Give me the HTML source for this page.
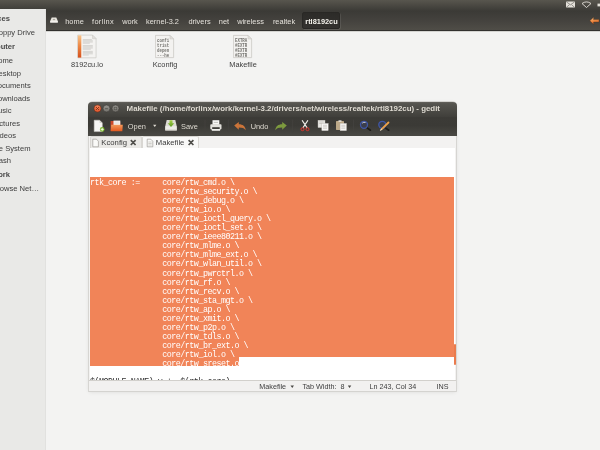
<!DOCTYPE html>
<html>
<head>
<meta charset="utf-8">
<title>Makefile - gedit</title>
<style>
html,body{margin:0;padding:0;}
body{width:600px;height:450px;overflow:hidden;position:relative;background:#f3f3f2;font-family:"Liberation Sans",sans-serif;color:#3c3c3c;}
.abs{position:absolute;}
#wrap{position:absolute;left:0;top:0;width:600px;height:450px;will-change:transform;}
#panel{left:0;top:0;width:600px;height:11px;background:linear-gradient(#58564e,#4b4943 45%,#3b3a36);}
#pathbar{left:46px;top:11px;width:554px;height:20px;background:linear-gradient(#3b3a36,#43413d 45%,#4f4d47);border-bottom:1px solid #32312e;box-shadow:0 1px 0 rgba(120,118,112,0.25);box-sizing:border-box;}
#sidebar{left:0;top:9.4px;width:46.3px;height:441px;background:#e9e9e7;border-right:0.6px solid #e1e1df;box-sizing:border-box;}
.sb{position:absolute;white-space:nowrap;font-size:7.6px;line-height:10px;height:10px;text-align:right;left:-60px;color:#3c3c3c;}
.sb.h{font-weight:bold;color:#4a4a4a;}
.pb{position:absolute;top:16.5px;font-size:7.4px;line-height:10px;height:10px;color:#e6e3dc;white-space:nowrap;text-align:center;}
.lbl{position:absolute;font-size:7.4px;line-height:10px;width:60px;text-align:center;color:#3c3c3c;white-space:nowrap;}
#sel{left:302px;top:12.3px;width:38.3px;height:17px;border-radius:2px;background:linear-gradient(#2c2b28,#34322f);border:1px solid #292825;box-sizing:border-box;box-shadow:0.7px 0.7px 0 rgba(255,255,255,0.13);}
#win{left:89.1px;top:102px;width:366.9px;height:289px;background:#f3f2f1;border-radius:4px 4px 0 0;box-shadow:0 0 0 0.9px #d4d3d0,0 1px 4px rgba(0,0,0,0.10);}
#title{left:-0.9px;top:-0.3px;width:368.7px;height:15.3px;border-radius:4px 4px 0 0;background:linear-gradient(#63615c,#55544f 12%,#403f3b);}
#ttext{left:27.2px;top:1.1px;width:334px;height:11px;line-height:11px;font-size:7.89px;font-weight:bold;color:#dfdbd2;white-space:nowrap;text-align:center;}
#tool{left:-0.9px;top:15px;width:368.7px;height:18.7px;background:linear-gradient(#3c3b37,#3b3a36 45%,#4a4944);}
.tt{position:absolute;top:19.6px;font-size:7.4px;line-height:10px;height:10px;color:#dfdbd2;white-space:nowrap;text-align:center;}
#tabs{left:-0.1px;top:33.7px;width:367px;height:12.7px;background:#f3f2f1;}
.tab{position:absolute;top:0;height:12.7px;box-sizing:border-box;border:1px solid #d9d7d3;border-bottom:none;border-radius:2px 2px 0 0;}
.tabt{position:absolute;top:2.3px;font-size:7.7px;line-height:10px;height:10px;color:#3c3c3c;white-space:nowrap;text-align:center;}
#view{left:0.9px;top:46.4px;width:365px;height:231.4px;background:#fff;overflow:hidden;}
#code{position:absolute;left:0;top:-7.3px;margin:0;font-family:"Liberation Mono",monospace;font-size:8.4px;letter-spacing:-0.51px;line-height:9.02px;color:#333;white-space:pre;tab-size:8;-moz-tab-size:8;}
.ln{display:block;height:9.02px;}
.t{position:relative;top:2.2px;}
.s{background:#f18458;color:#fff;}
.ln.s{width:364px;}
#status{left:0;top:277.6px;width:366.9px;height:11.4px;background:#f2f1f0;border-top:1px solid #d2d0cc;box-sizing:border-box;}
.st{position:absolute;top:1.3px;font-size:7.2px;line-height:10px;height:10px;color:#3c3c3c;white-space:nowrap;text-align:center;}
#thumb{left:365.1px;top:241.8px;width:2.2px;height:21.7px;background:#ea7b4d;border-radius:1px;}
</style>
</head>
<body>
<div id="wrap">
<div id="panel" class="abs"></div>
<div id="sidebar" class="abs">
<div class="sb h" style="width:70.0px;top:4.5px">Devices</div>
<div class="sb" style="width:95.0px;top:18.5px">Floppy Drive</div>
<div class="sb h" style="width:75.0px;top:32.5px">Computer</div>
<div class="sb" style="width:73.0px;top:47.0px">Home</div>
<div class="sb" style="width:81.0px;top:59.6px">Desktop</div>
<div class="sb" style="width:90.7px;top:71.9px">Documents</div>
<div class="sb" style="width:90.0px;top:84.5px">Downloads</div>
<div class="sb" style="width:71.5px;top:96.7px">Music</div>
<div class="sb" style="width:80.0px;top:109.6px">Pictures</div>
<div class="sb" style="width:76.0px;top:121.6px">Videos</div>
<div class="sb" style="width:90.5px;top:134.7px">File System</div>
<div class="sb" style="width:71.0px;top:146.4px">Trash</div>
<div class="sb h" style="width:70.0px;top:160.5px">Network</div>
<div class="sb" style="width:99.0px;top:175.1px">Browse Net…</div>
</div>
<div id="pathbar" class="abs"></div>
<div id="sel" class="abs"></div>
<svg class="abs" style="left:48px;top:14px" width="12" height="11" viewBox="48 14 12 11"><path d="M51.700 17.500h4.600l1.500 3.600v1.400h-7.600v-1.400z" fill="#e9e6df"/><path d="M50.200 21.200h7.600v1.300h-7.600z" fill="#f6f4f0"/><ellipse cx="54" cy="19.500" rx="1.300" ry="0.800" fill="#aaa79f"/></svg>
<div class="pb" style="left:55px;width:39px">home</div>
<div class="pb" style="left:82px;width:42px;letter-spacing:0.3px">forlinx</div>
<div class="pb" style="left:112px;width:36px">work</div>
<div class="pb" style="left:136px;width:53px">kernel-3.2</div>
<div class="pb" style="left:178px;width:43px">drivers</div>
<div class="pb" style="left:209px;width:30px">net</div>
<div class="pb" style="left:227px;width:47px">wireless</div>
<div class="pb" style="left:262px;width:44px">realtek</div>
<div class="pb" style="left:295px;width:53px;font-weight:bold;color:#f4f2ec;font-size:7.4px">rtl8192cu</div>
<svg class="abs" style="left:588px;top:15px" width="12" height="12" viewBox="0 0 12 12"><defs><linearGradient id="ar" x1="0" y1="0" x2="0.3" y2="1"><stop offset="0" stop-color="#fbd3a2"/><stop offset="0.5" stop-color="#f0914a"/><stop offset="1" stop-color="#dc6526"/></linearGradient></defs><path d="M1.800 5.800L5.600 2.300v2.300H11v2.400H5.600v2.300z" fill="url(#ar)" stroke="#5c3418" stroke-width="0.400"/></svg>
<svg class="abs" style="left:560px;top:0" width="40" height="10" viewBox="0 0 40 10"><rect x="6" y="1.4" width="9" height="6.2" rx="0.5" fill="#e4e1da"/><path d="M6.400 1.900l4.100 2.900 4.100-2.900M6.400 7.300l3-2.500M14.600 7.300l-3-2.500" stroke="#5a5853" stroke-width="0.600" fill="none"/><path d="M22 3.500Q26.500 0.300 31 3.500L26.500 7.500z" fill="none" stroke="#e4e1da" stroke-width="0.900" stroke-linejoin="round"/><rect x="37.500" y="3.600" width="3" height="2.800" fill="#e4e1da"/></svg>
<svg class="abs" style="left:76px;top:33px" width="22" height="27" viewBox="76 33 22 27"><defs><linearGradient id="og" x1="0" y1="0" x2="0" y2="1"><stop offset="0" stop-color="#f6c48c"/><stop offset="0.45" stop-color="#ee8a48"/><stop offset="1" stop-color="#d5501c"/></linearGradient></defs><path d="M77.700 35.100h14.800l3.600 3.600v19.100H77.700z" fill="#f4f3f1" stroke="#c9c7c3" stroke-width="0.700"/><path d="M92.500 35.100v3.600h3.600z" fill="#e2e0dc" stroke="#c9c7c3" stroke-width="0.500"/><rect x="77.900" y="35.400" width="3.500" height="22.200" fill="url(#og)"/><rect x="81.400" y="35.400" width="0.500" height="22.200" fill="#f8e3cf"/><g stroke="#bcbab6" stroke-width="0.550"><path d="M82.800 39.600h9M82.800 40.800h10M82.800 42h10M82.800 43.200h7M82.800 45.600h10M82.800 46.800h10M82.800 48h10M82.800 49.200h8M82.800 51.400h10M82.800 52.600h10M82.800 53.800h10M82.800 55h6"/></g></svg>
<svg class="abs" style="left:155.0px;top:33px" width="22" height="27" viewBox="0 33 22 27"><path d="M0.400 35.400h14.600l3.600 3.600v18.600H0.400z" fill="#f3f2f0" stroke="#c6c4c0" stroke-width="0.700"/><path d="M15 35.400v3.600h3.600z" fill="#e2e0dc" stroke="#c6c4c0" stroke-width="0.500"/><text x="2" y="42.1" textLength="12.200" lengthAdjust="spacingAndGlyphs" font-family="Liberation Mono,monospace" font-size="5.600" font-weight="bold" fill="#73726e">confi</text><text x="2" y="47.1" textLength="12.200" lengthAdjust="spacingAndGlyphs" font-family="Liberation Mono,monospace" font-size="5.600" font-weight="bold" fill="#73726e">trist</text><text x="2" y="52.1" textLength="12.200" lengthAdjust="spacingAndGlyphs" font-family="Liberation Mono,monospace" font-size="5.600" font-weight="bold" fill="#73726e">depen</text><text x="2" y="57.1" textLength="12.200" lengthAdjust="spacingAndGlyphs" font-family="Liberation Mono,monospace" font-size="5.600" font-weight="bold" fill="#73726e">---he</text></svg>
<svg class="abs" style="left:232.6px;top:33px" width="22" height="27" viewBox="0 33 22 27"><path d="M0.400 35.400h14.600l3.600 3.600v18.600H0.400z" fill="#f3f2f0" stroke="#c6c4c0" stroke-width="0.700"/><path d="M15 35.400v3.600h3.600z" fill="#e2e0dc" stroke="#c6c4c0" stroke-width="0.500"/><text x="2" y="42.1" textLength="12.200" lengthAdjust="spacingAndGlyphs" font-family="Liberation Mono,monospace" font-size="5.600" font-weight="bold" fill="#73726e">EXTRA</text><text x="2" y="47.1" textLength="12.200" lengthAdjust="spacingAndGlyphs" font-family="Liberation Mono,monospace" font-size="5.600" font-weight="bold" fill="#73726e">#EXTR</text><text x="2" y="52.1" textLength="12.200" lengthAdjust="spacingAndGlyphs" font-family="Liberation Mono,monospace" font-size="5.600" font-weight="bold" fill="#73726e">#EXTR</text><text x="2" y="57.1" textLength="12.200" lengthAdjust="spacingAndGlyphs" font-family="Liberation Mono,monospace" font-size="5.600" font-weight="bold" fill="#73726e">#EXTR</text></svg>
<div class="lbl" style="left:57px;top:59.5px">8192cu.lo</div>
<div class="lbl" style="left:135px;top:59.5px">Kconfig</div>
<div class="lbl" style="left:213px;top:59.5px">Makefile</div>
<div id="win" class="abs">
<div id="title" class="abs"></div>
<svg class="abs" style="left:2.900px;top:1.300px" width="32" height="12" viewBox="0 0 32 12"><defs><radialGradient id="rc" cx="0.5" cy="0.3" r="0.75"><stop offset="0" stop-color="#f4875c"/><stop offset="1" stop-color="#d84a22"/></radialGradient><linearGradient id="gb" x1="0" y1="0" x2="0" y2="1"><stop offset="0" stop-color="#9a9892"/><stop offset="1" stop-color="#74726c"/></linearGradient></defs><circle cx="5.500" cy="5.500" r="3.700" fill="url(#rc)" stroke="#3b2a22" stroke-width="0.500"/><path d="M4.200 4.200l2.600 2.600M6.800 4.200L4.200 6.800" stroke="#7d2a12" stroke-width="1"/><circle cx="14.500" cy="5.500" r="3.500" fill="url(#gb)" stroke="#3a3935" stroke-width="0.600"/><path d="M13.100 5.700h2.800" stroke="#55544f" stroke-width="0.900"/><circle cx="23.500" cy="5.500" r="3.500" fill="url(#gb)" stroke="#3a3935" stroke-width="0.600"/><rect x="22.200" y="4.200" width="2.600" height="2.600" fill="none" stroke="#55544f" stroke-width="0.700"/></svg>
<div id="ttext" class="abs">Makefile (/home/forlinx/work/kernel-3.2/drivers/net/wireless/realtek/rtl8192cu) - gedit</div>
<div id="tool" class="abs"></div>
<svg class="abs" style="left:-89.1px;top:-102px" width="600" height="450" viewBox="0 0 600 450">
<defs><linearGradient id="fo" x1="0" y1="0" x2="0" y2="1"><stop offset="0" stop-color="#f39a5c"/><stop offset="1" stop-color="#e2581f"/></linearGradient><linearGradient id="gr" x1="0" y1="0" x2="0" y2="1"><stop offset="0" stop-color="#a6d04a"/><stop offset="1" stop-color="#5e9a22"/></linearGradient></defs>
<path d="M94.200 120.200h5.400l2.700 2.700v8.700h-8.100z" fill="#f6f5f3" stroke="#d5d2cc" stroke-width="0.500"/><path d="M99.600 120.200v2.700h2.700z" fill="#d2cfc9"/><circle cx="102.200" cy="129.400" r="2.300" fill="#79b52d"/><path d="M102.200 127.900v3M100.700 129.400h3" stroke="#f4fbe6" stroke-width="0.900"/>
<path d="M110.600 121h4.200l0.900 1.100h4.600v8.800h-9.700z" fill="#c9482a"/><rect x="113.500" y="120.600" width="6.800" height="4.500" fill="#f7f6f4"/><path d="M114.300 122h5.200M114.300 123.300h5.200" stroke="#c9c6c0" stroke-width="0.400"/><path d="M111.200 124.800h11.600l-0.500 6.400h-11.500z" fill="url(#fo)"/>
<path d="M153.100 124.700h3.300l-1.650 2.200z" fill="#dfdbd2"/>
<path d="M166.700 120h8.600l1.400 6v4.400h-11.400V126z" fill="#dcdad4"/><path d="M165.300 126.200h11.400v4.200h-11.400z" fill="#ecebe7"/><path d="M165.600 130.100h10.800" stroke="#a9a6a0" stroke-width="0.600"/><path d="M169.500 120.300h3v2.900h1.800l-3.300 3.700-3.300-3.700h1.800z" fill="url(#gr)"/>
<rect x="212.500" y="120.200" width="6.800" height="4.600" fill="#f7f6f4"/><path d="M213.800 122.400h4.200" stroke="#8f8c86" stroke-width="0.500"/><rect x="210.300" y="124.200" width="11.200" height="5.200" rx="0.800" fill="#e3e1dc"/><rect x="212.200" y="127.200" width="7.500" height="1.900" fill="#3c3b37"/><rect x="211.800" y="129" width="8.300" height="1.800" fill="#f1f0ed"/>
<path d="M205 119.500v12M228.300 119.500v12M292.700 119.500v12M353.500 119.500v12" stroke="#454440" stroke-width="0.700"/>
<path d="M234.200 125.600l4.600-3.500v2.100c4 0 6.600 2 6.900 6-1.400-2-3.300-2.700-6.900-2.700v2.200z" fill="#cb7439"/>
<path d="M286.800 125.600l-4.600-3.500v2.100c-4 0-6.600 2-6.900 6 1.400-2 3.300-2.700 6.900-2.700v2.200z" fill="#7d9a3e"/>
<path d="M302.300 120.600l4.700 7M307.700 120.600l-4.700 7" stroke="#eceae5" stroke-width="1.100" stroke-linecap="round"/><circle cx="302.500" cy="129.200" r="1.500" fill="none" stroke="#e0342c" stroke-width="1"/><circle cx="307.500" cy="129.200" r="1.500" fill="none" stroke="#e0342c" stroke-width="1"/>
<rect x="318" y="120.200" width="7" height="7.400" fill="#e9e8e4" stroke="#bfbcb6" stroke-width="0.400"/><path d="M319.300 122h4.400M319.300 123.500h4.400" stroke="#aeaba5" stroke-width="0.500"/><rect x="321.800" y="123.400" width="6.400" height="7.300" fill="#f7f6f4" stroke="#bfbcb6" stroke-width="0.400"/><path d="M323 125.300h4M323 126.800h4M323 128.300h4" stroke="#aeaba5" stroke-width="0.500"/>
<rect x="336" y="120.900" width="8" height="9" rx="0.600" fill="#bda988"/><rect x="338.500" y="120.300" width="3" height="1.500" fill="#e6e4df"/><rect x="340.100" y="123.400" width="6.400" height="7.300" fill="#f7f6f4" stroke="#bfbcb6" stroke-width="0.400"/><path d="M341.300 125.300h4M341.300 126.800h4M341.300 128.300h4" stroke="#aeaba5" stroke-width="0.500"/>
<path d="M366.800 127.600l3.600 2.600" stroke="#1d1c1a" stroke-width="1.700" stroke-linecap="round"/><circle cx="364" cy="124.800" r="3.500" fill="#3b3e4c" stroke="#3f57a8" stroke-width="1.300"/><path d="M362.200 123.200q1.500-1.400 3.300-0.700" stroke="#e6e9f5" stroke-width="0.800" fill="none"/>
<path d="M385.100 127.600l3.600 2.600" stroke="#1d1c1a" stroke-width="1.700" stroke-linecap="round"/><circle cx="382.300" cy="124.800" r="3.500" fill="#3b3e4c" stroke="#3f57a8" stroke-width="1.300"/><path d="M388.500 122.500l-6.800 6.600" stroke="#eda047" stroke-width="1.800" stroke-linecap="round"/><path d="M381.700 129.100l-1.200 1.100" stroke="#e8d9c0" stroke-width="1.200" stroke-linecap="round"/>
</svg>
<div class="tt" style="left:28.9px;width:37.7px">Open</div>
<div class="tt" style="left:82.6px;width:35.6px">Save</div>
<div class="tt" style="left:151.6px;width:37.6px">Undo</div>
<div id="tabs" class="abs">
<div class="tab" style="left:0.8px;width:52.4px;background:#eae9e6;top:0.5px;height:12.2px"></div>
<div class="tab" style="left:53.4px;width:56.4px;background:#f9f9f8"></div>
<svg class="abs" style="left:1px;top:0.500px" width="120" height="13" viewBox="0 0 120 13"><path d="M2.800 3.200h3.600l2 2v5.600H2.800z" fill="#fafaf8" stroke="#8f8c86" stroke-width="0.600"/><path d="M57.200 3.200h3.600l2 2v5.600h-5.600z" fill="#fafaf8" stroke="#8f8c86" stroke-width="0.600"/><path d="M58.300 6h3.400M58.300 7.500h3.400M58.300 9h3.400" stroke="#a9a6a0" stroke-width="0.500"/><path d="M40.800 4.200l4.800 4.800M45.600 4.200l-4.800 4.800M98.600 4.200l4.800 4.800M103.400 4.200l-4.800 4.800" stroke="#4f4e4a" stroke-width="1.700"/></svg>
<div class="tabt" style="left:2.700px;width:45px">Kconfig</div>
<div class="tabt" style="left:58.600px;width:45px">Makefile</div>
</div>
<div id="view" class="abs"><pre id="code">
<span class="ln"> </span><span class="ln"> </span><span class="ln"> </span><span class="ln"> </span><span class="ln s"><span class="t">rtk_core :=	core/rtw_cmd.o \</span></span><span class="ln s"><span class="t">		core/rtw_security.o \</span></span><span class="ln s"><span class="t">		core/rtw_debug.o \</span></span><span class="ln s"><span class="t">		core/rtw_io.o \</span></span><span class="ln s"><span class="t">		core/rtw_ioctl_query.o \</span></span><span class="ln s"><span class="t">		core/rtw_ioctl_set.o \</span></span><span class="ln s"><span class="t">		core/rtw_ieee80211.o \</span></span><span class="ln s"><span class="t">		core/rtw_mlme.o \</span></span><span class="ln s"><span class="t">		core/rtw_mlme_ext.o \</span></span><span class="ln s"><span class="t">		core/rtw_wlan_util.o \</span></span><span class="ln s"><span class="t">		core/rtw_pwrctrl.o \</span></span><span class="ln s"><span class="t">		core/rtw_rf.o \</span></span><span class="ln s"><span class="t">		core/rtw_recv.o \</span></span><span class="ln s"><span class="t">		core/rtw_sta_mgt.o \</span></span><span class="ln s"><span class="t">		core/rtw_ap.o \</span></span><span class="ln s"><span class="t">		core/rtw_xmit.o \</span></span><span class="ln s"><span class="t">		core/rtw_p2p.o \</span></span><span class="ln s"><span class="t">		core/rtw_tdls.o \</span></span><span class="ln s"><span class="t">		core/rtw_br_ext.o \</span></span><span class="ln s"><span class="t">		core/rtw_iol.o \</span></span><span class="ln"><span class="s" style="display:inline-block;height:9.02px"><span class="t">		core/rtw_sreset.o</span></span></span><span class="ln"> </span><span class="ln"><span class="t">$(MODULE_NAME)-y += $(rtk_core)</span></span><span class="ln"> </span>
</pre></div>
<div id="thumb" class="abs"></div>
<div id="status" class="abs">
<div class="st" style="left:159.7px;width:47.9px">Makefile</div>
<div class="st" style="left:202.9px;width:63.0px">Tab Width:&nbsp; 8</div>
<div class="st" style="left:270.9px;width:65.8px">Ln 243, Col 34</div>
<div class="st" style="left:337.6px;width:31.6px">INS</div>
<svg class="abs" style="left:0;top:0" width="367" height="11" viewBox="0 0 367 11"><path d="M201.500 4.500h3.500l-1.750 2.400zM258.800 4.500h3.500l-1.750 2.400z" fill="#4a4945"/></svg>
</div>
</div>
</div>
</body>
</html>
